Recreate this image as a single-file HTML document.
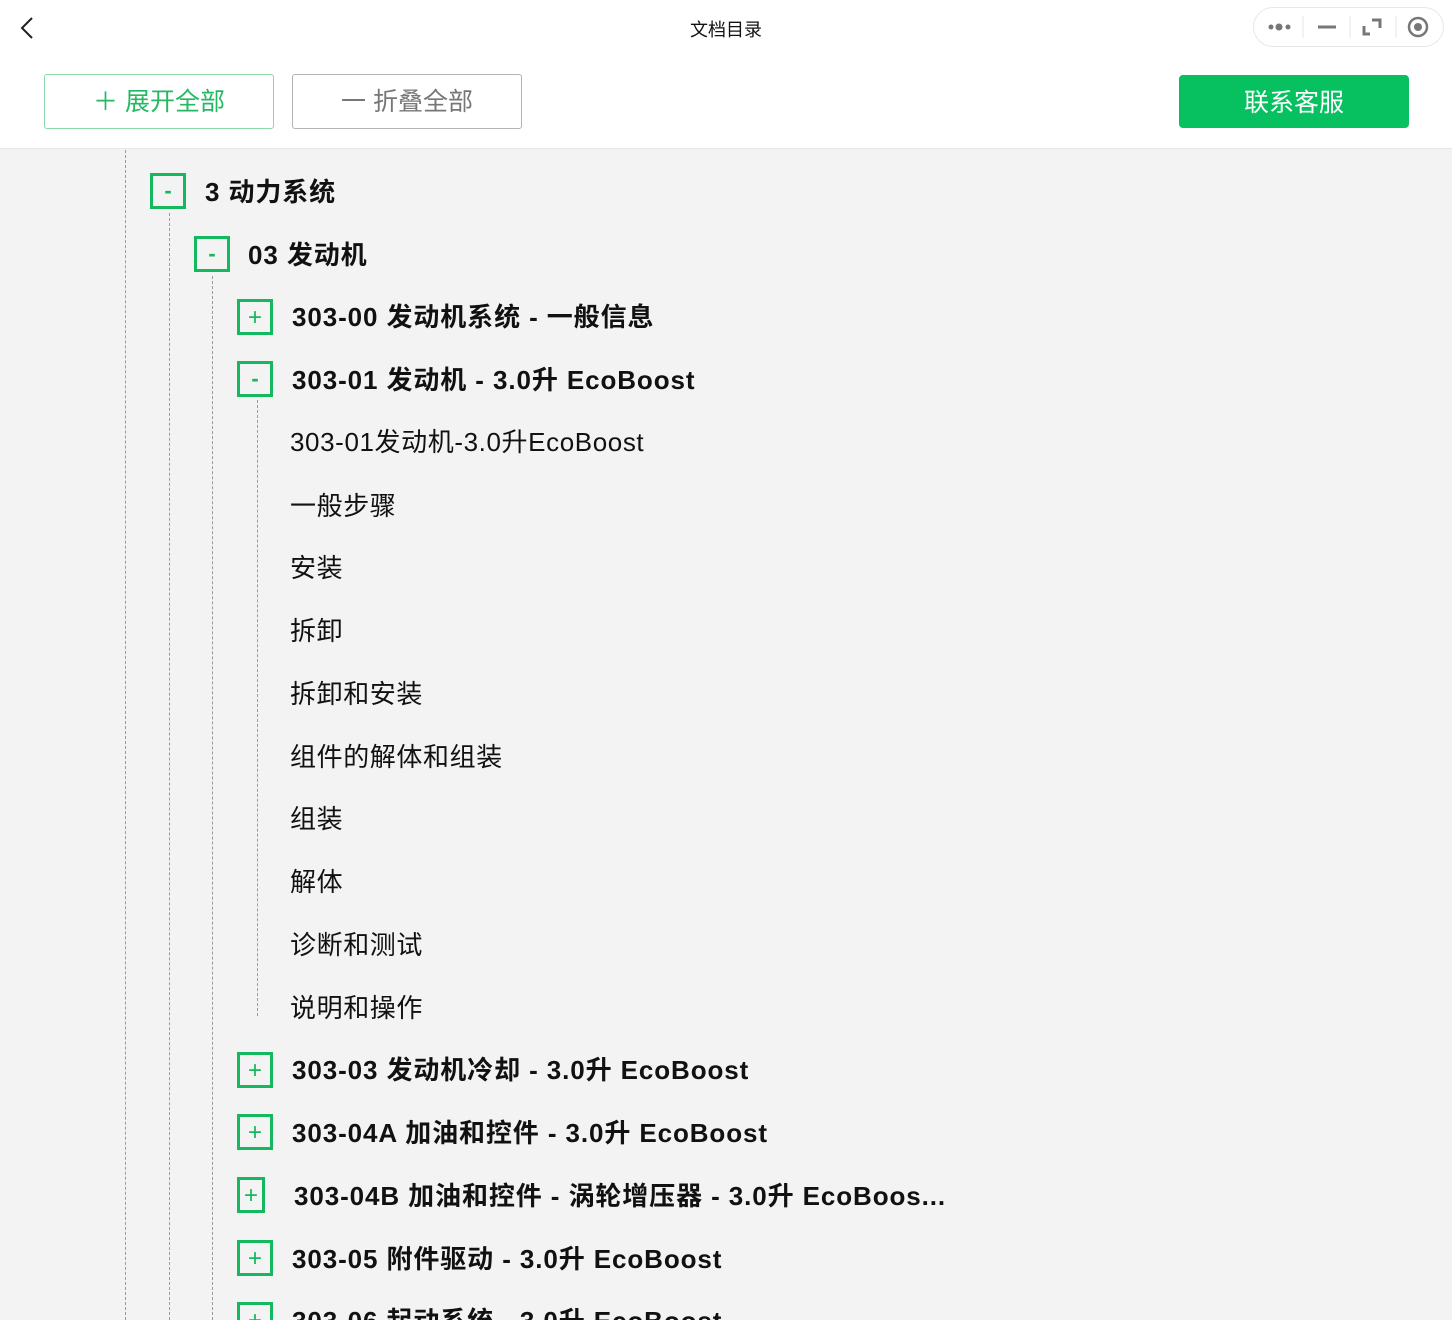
<!DOCTYPE html>
<html><head><meta charset="utf-8"><style>
*{margin:0;padding:0;box-sizing:border-box}
html,body{width:1452px;height:1320px;overflow:hidden}
body{background:#f3f3f3;font-family:"Liberation Sans","Noto Sans CJK SC",sans-serif;position:relative}
.hdr{position:absolute;left:0;top:0;width:1452px;height:149px;background:#fff;border-bottom:1px solid #e6e6e6}
.title{position:absolute;left:0;width:1452px;top:16px;text-align:center;font-size:18px;color:#111}
.btn{position:absolute;top:74px;height:55px;width:230px;border:1px solid;border-radius:3px;font-size:25px;text-align:center;line-height:55px}
.cap{position:absolute;left:1253px;top:7px;width:191px;height:40px;border:1px solid #e8e8e8;border-radius:20px;background:#fff}
.vl{position:absolute;border-left:1px dashed #9a9a9a}
.box{position:absolute;width:36px;height:36px;border:3px solid #14b85e;color:#14b85e;font-size:24px;text-align:center;line-height:31px}
.t{position:absolute;font-size:26px;color:#111;white-space:nowrap;line-height:30px;letter-spacing:0.6px}
.b{font-weight:bold;letter-spacing:0.9px}
</style></head><body>
<div class="hdr">
<svg style="position:absolute;left:18px;top:16px" width="18" height="24"><path d="M14 2 L4 12 L14 22" stroke="#222" stroke-width="2" fill="none"/></svg>
<div class="title">文档目录</div>
<div class="cap">
<svg width="191" height="40" style="position:absolute;left:-1px;top:-1px">
<circle cx="18" cy="20" r="2.5" fill="#777"/><circle cx="26" cy="20" r="3.5" fill="#777"/><circle cx="35" cy="20" r="2.5" fill="#777"/>
<line x1="50" y1="9" x2="50" y2="31" stroke="#e5e5e5"/>
<line x1="65" y1="20" x2="83" y2="20" stroke="#777" stroke-width="3"/>
<line x1="97" y1="9" x2="97" y2="31" stroke="#e5e5e5"/>
<path d="M111 19 V27 H117 M119 13 H127 V21" stroke="#777" stroke-width="3" fill="none"/>
<line x1="143" y1="9" x2="143" y2="31" stroke="#e5e5e5"/>
<circle cx="165" cy="20" r="9" stroke="#777" stroke-width="2.5" fill="none"/><circle cx="165" cy="20" r="4" fill="#777"/>
</svg></div>
<div class="btn" style="left:44px;border-color:#8dd8a9;color:#24b863">＋ 展开全部</div>
<div class="btn" style="left:292px;border-color:#b3b3b3;color:#777">一 折叠全部</div>
<div class="btn" style="left:1179px;top:75px;height:53px;width:230px;background:#07c160;border-color:#07c160;color:#fff;line-height:55px;border-radius:4px">联系客服</div>
</div>
<div class="vl" style="left:125px;top:150px;height:1170px"></div>
<div class="vl" style="left:169px;top:213px;height:1107px"></div>
<div class="vl" style="left:212px;top:276px;height:1044px"></div>
<div class="vl" style="left:257px;top:400px;height:616px"></div>

<div class="box" style="left:150px;top:173px;font-weight:bold;font-size:22px;line-height:29px">-</div><div class="t b" style="left:205px;top:177px">3 动力系统</div>
<div class="box" style="left:194px;top:236px;font-weight:bold;font-size:22px;line-height:29px">-</div><div class="t b" style="left:248px;top:240px">03 发动机</div>
<div class="box" style="left:237px;top:299px">+</div><div class="t b" style="left:292px;top:302px">303-00 发动机系统 - 一般信息</div>
<div class="box" style="left:237px;top:361px;font-weight:bold;font-size:22px;line-height:29px">-</div><div class="t b" style="left:292px;top:365px">303-01 发动机 - 3.0升 EcoBoost</div>
<div class="t" style="left:290px;top:427px">303-01发动机-3.0升EcoBoost</div>
<div class="t" style="left:290px;top:491px">一般步骤</div>
<div class="t" style="left:290px;top:553px">安装</div>
<div class="t" style="left:290px;top:616px">拆卸</div>
<div class="t" style="left:290px;top:679px">拆卸和安装</div>
<div class="t" style="left:290px;top:742px">组件的解体和组装</div>
<div class="t" style="left:290px;top:804px">组装</div>
<div class="t" style="left:290px;top:867px">解体</div>
<div class="t" style="left:290px;top:930px">诊断和测试</div>
<div class="t" style="left:290px;top:993px">说明和操作</div>
<div class="box" style="left:237px;top:1052px">+</div><div class="t b" style="left:292px;top:1055px">303-03 发动机冷却 - 3.0升 EcoBoost</div>
<div class="box" style="left:237px;top:1114px">+</div><div class="t b" style="left:292px;top:1118px">303-04A 加油和控件 - 3.0升 EcoBoost</div>
<div class="box" style="left:237px;top:1177px;width:28px">+</div><div class="t b" style="left:294px;top:1181px">303-04B 加油和控件 - 涡轮增压器 - 3.0升 EcoBoos...</div>
<div class="box" style="left:237px;top:1240px">+</div><div class="t b" style="left:292px;top:1244px">303-05 附件驱动 - 3.0升 EcoBoost</div>
<div class="box" style="left:237px;top:1302px">+</div><div class="t b" style="left:292px;top:1306px">303-06 起动系统 - 3.0升 EcoBoost</div>
</body></html>
